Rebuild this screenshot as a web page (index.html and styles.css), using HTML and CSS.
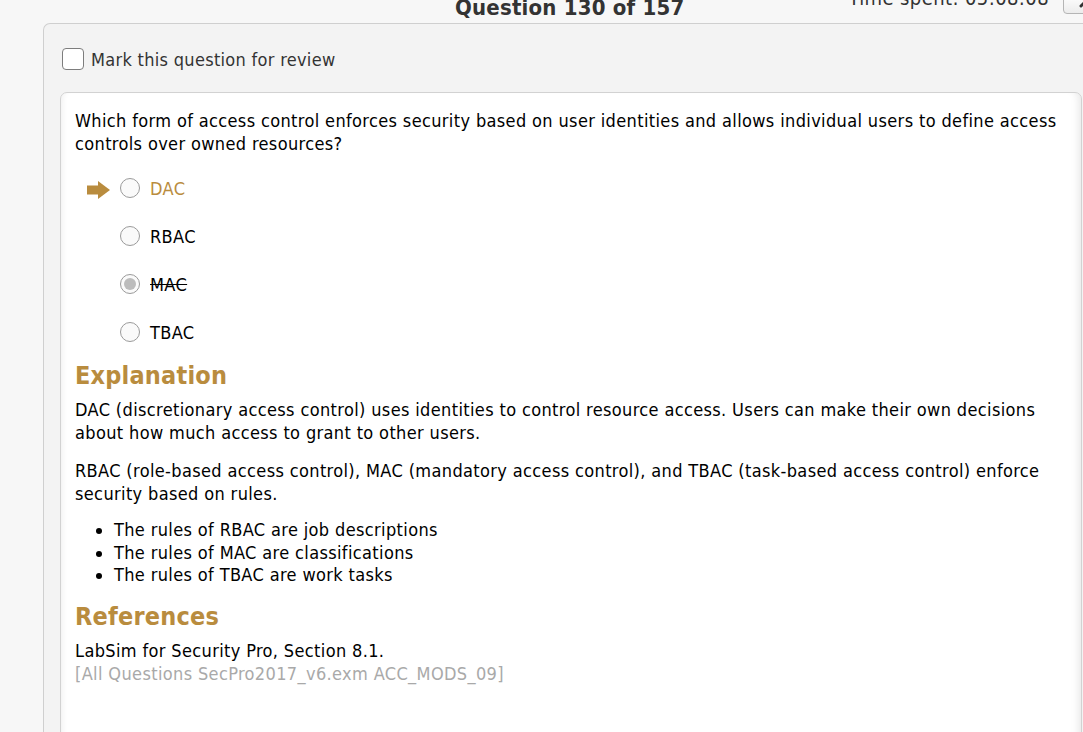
FILE: index.html
```html
<!DOCTYPE html>
<html>
<head>
<meta charset="utf-8">
<link rel="stylesheet" href="styles.css">
</head>
<body>
<div class="topbar">
  <div class="title">Question 130 of 157</div>
  <div class="time">Time spent: 05:08:08</div>
  <div class="tool-btn">
    <svg width="20" height="16" viewBox="0 0 20 16"><path d="M11 11 L18 4" stroke="#333" stroke-width="3" stroke-linecap="round"/><path d="M15 2 L20 0 L18 6 Z" fill="#333"/></svg>
  </div>
</div>
<div class="panel">
  <label class="review">
    <span class="checkbox"></span>
    <span>Mark this question for review</span>
  </label>
  <div class="card">
    <p class="question">Which form of access control enforces security based on user identities and allows individual users to define access controls over owned resources?</p>
    <div class="options">
      <div class="option correct">
        <span class="arrow-slot"><svg width="23" height="18" viewBox="0 0 23 18"><rect x="0" y="4.5" width="12" height="9" fill="#b98c3e"/><polygon points="11,0 23,9 11,18" fill="#b98c3e"/></svg></span>
        <span class="radio"></span>
        <span class="opt-label">DAC</span>
      </div>
      <div class="option">
        <span class="arrow-slot"></span>
        <span class="radio"></span>
        <span class="opt-label">RBAC</span>
      </div>
      <div class="option chosen">
        <span class="arrow-slot"></span>
        <span class="radio"><span class="dot"></span></span>
        <span class="opt-label">MAC</span>
      </div>
      <div class="option">
        <span class="arrow-slot"></span>
        <span class="radio"></span>
        <span class="opt-label">TBAC</span>
      </div>
    </div>
    <h2 class="heading first">Explanation</h2>
    <p class="para">DAC (discretionary access control) uses identities to control resource access. Users can make their own decisions about how much access to grant to other users.</p>
    <p class="para second">RBAC (role-based access control), MAC (mandatory access control), and TBAC (task-based access control) enforce security based on rules.</p>
    <ul class="rules">
      <li>The rules of RBAC are job descriptions</li>
      <li>The rules of MAC are classifications</li>
      <li>The rules of TBAC are work tasks</li>
    </ul>
    <h2 class="heading refs">References</h2>
    <p class="ref-line">LabSim for Security Pro, Section 8.1.</p>
    <p class="ref-id">[All Questions SecPro2017_v6.exm ACC_MODS_09]</p>
  </div>
</div>
</body>
</html>
```

FILE: styles.css
```css
html, body {
  margin: 0;
  padding: 0;
}
body {
  background: #f7f7f7;
  font-family: "DejaVu Sans Condensed", "DejaVu Sans", sans-serif;
  color: #000;
  overflow: hidden;
  height: 732px;
}
.topbar {
  height: 23px;
  display: flex;
  align-items: flex-end;
}
.title {
  margin-left: 455px;
  margin-bottom: 4px;
  font-size: 22px;
  line-height: 22px;
  font-weight: bold;
  letter-spacing: 0.2px;
  color: #333;
}
.time {
  margin-left: auto;
  align-self: flex-start;
  margin-top: -12px;
  font-size: 20px;
  line-height: 20px;
  letter-spacing: 0.4px;
  color: #333;
}
.tool-btn {
  align-self: flex-start;
  margin-top: -6px;
  margin-left: 14px;
  margin-right: -12px;
  width: 32px;
  height: 20px;
  border: 1px solid #b5b5b5;
  border-radius: 4px;
  background: linear-gradient(#ffffff, #ececec);
  box-sizing: border-box;
  padding-left: 6px;
}
.tool-btn svg {
  display: block;
}
.panel {
  margin: 0 -16px 0 43px;
  border: 1px solid #cfcfcf;
  border-bottom: none;
  border-radius: 7px 7px 0 0;
  background: #f3f3f3;
  padding: 24px 16px 0 16px;
  height: 800px;
}
.review {
  display: flex;
  align-items: center;
  gap: 7px;
  margin-left: 2px;
  font-size: 18px;
  letter-spacing: 0.3px;
  color: #333;
  height: 22px;
}
.checkbox {
  width: 22px;
  height: 22px;
  box-sizing: border-box;
  border: 1px solid #7d7d7d;
  border-radius: 4px;
  background: #fff;
}
.card {
  margin-top: 22px;
  border: 1px solid #d2d2d2;
  border-radius: 7px 7px 0 0;
  background: #fff;
  padding: 16px 14px 0 14px;
  height: 760px;
  box-shadow: inset -9px 0 8px -7px rgba(0,0,0,0.10), inset 7px 0 6px -6px rgba(0,0,0,0.07);
  font-size: 18px;
  letter-spacing: 0.36px;
}
.question {
  margin: 0;
  line-height: 23px;
}
.options {
  margin-top: 9px;
}
.option {
  display: flex;
  align-items: center;
  height: 48px;
}
.arrow-slot {
  width: 45px;
  display: flex;
  justify-content: flex-start;
  padding-left: 12px;
  box-sizing: border-box;
  margin-top: 3px;
}
.arrow-slot svg {
  display: block;
}
.radio {
  width: 20px;
  height: 20px;
  box-sizing: border-box;
  border: 1px solid #9a9a9a;
  border-radius: 50%;
  background: #fafafa;
  display: flex;
  align-items: center;
  justify-content: center;
  margin-right: 10px;
}
.dot {
  width: 12px;
  height: 12px;
  border-radius: 50%;
  background: #bcbcbc;
}
.opt-label {
  line-height: 23px;
}
.correct .opt-label {
  color: #b98c3e;
}
.chosen .opt-label {
  text-decoration: line-through;
}
.heading {
  margin: 5px 0 0 0;
  font-size: 25px;
  line-height: 30px;
  font-weight: bold;
  letter-spacing: 0.2px;
  color: #b98c3e;
}
.para {
  margin: 7px 0 0 0;
  line-height: 23px;
}
.para.second {
  margin-top: 15px;
}
.rules {
  margin: 14px 0 0 0;
  padding-left: 39px;
  line-height: 22.5px;
}
.heading.refs {
  margin-top: 15px;
}
.ref-line {
  margin: 7px 0 0 0;
  line-height: 23px;
}
.ref-id {
  margin: 0;
  line-height: 23px;
  color: #a9a9a9;
}
```
